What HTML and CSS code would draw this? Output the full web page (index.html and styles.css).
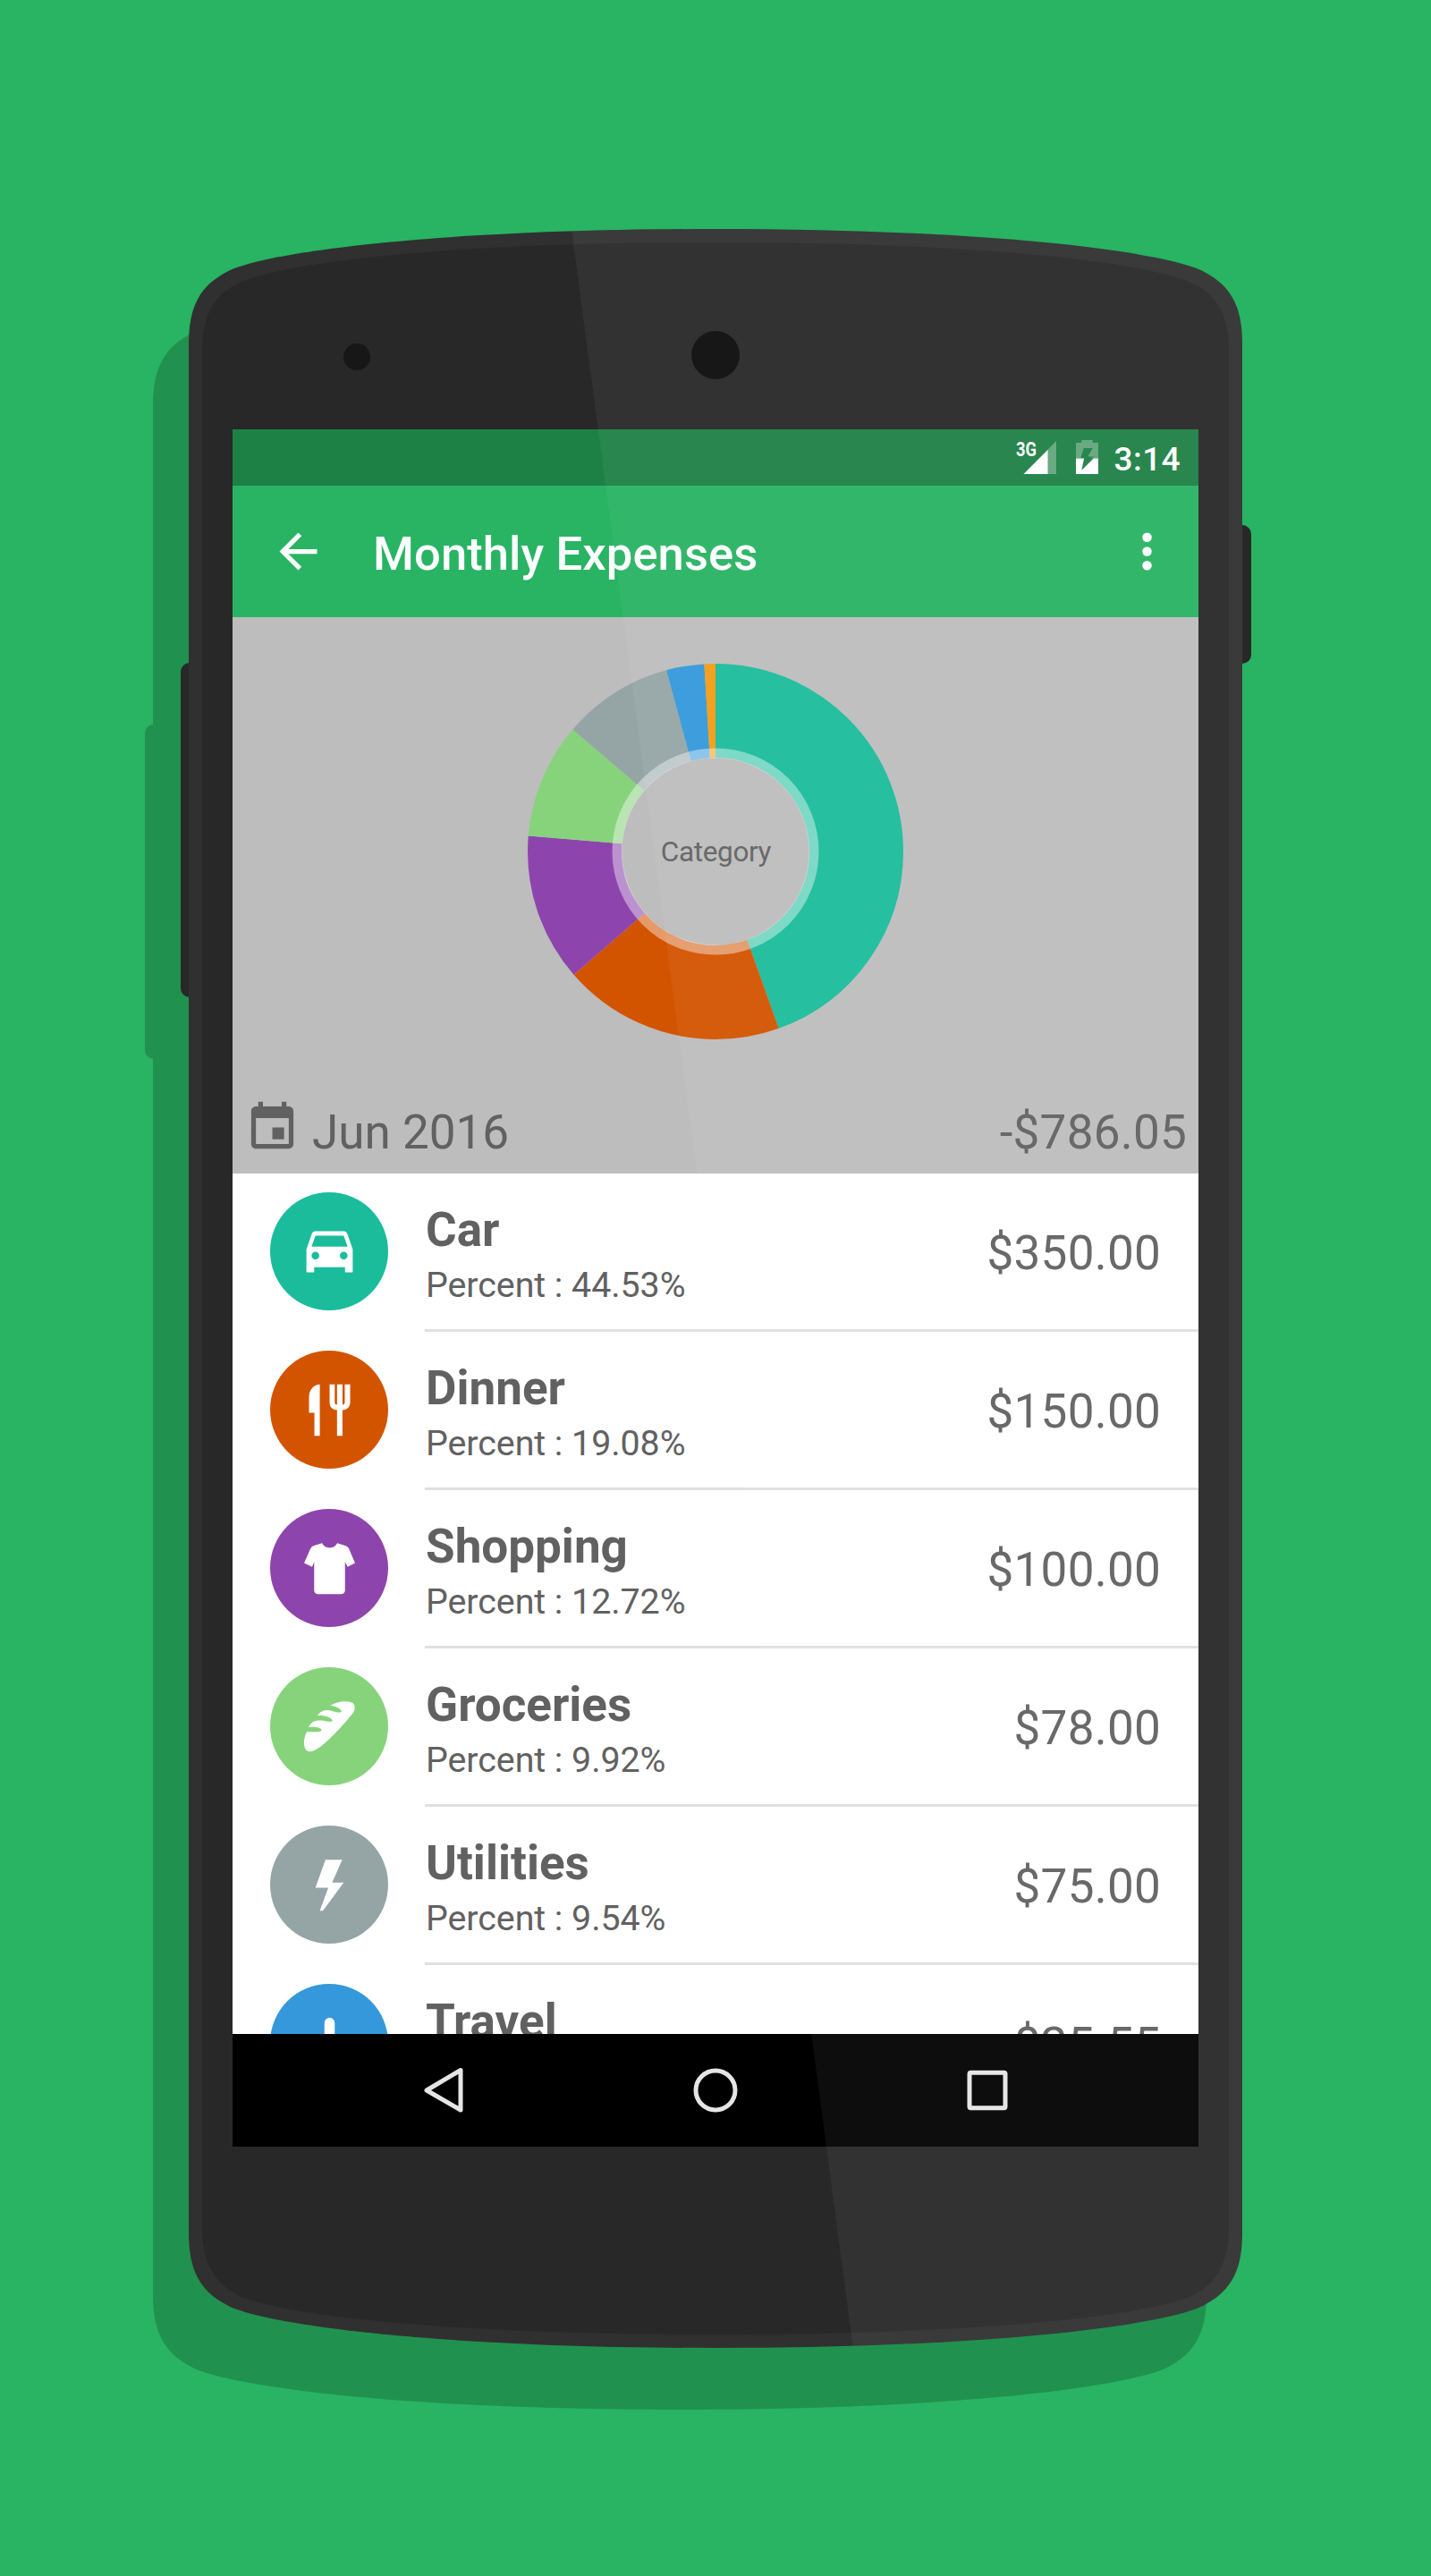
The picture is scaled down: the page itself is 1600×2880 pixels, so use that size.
FILE: index.html
```html
<!DOCTYPE html>
<html lang="en">
<head>
<meta charset="utf-8">
<title>Monthly Expenses</title>
<link rel="stylesheet" href="styles.css">
</head>
<body>
<main class="stage">
  <svg class="phone" viewBox="0 0 1600 2880" aria-hidden="true">
    <defs>
      <path id="body" d="M211 385C211 340 225 316 262 300C325 277 520 256 800 256C1080 256 1275 277 1338 300C1375 316 1389 340 1389 385V2496C1389 2541 1375 2565 1338 2581C1275 2604 1080 2625 800 2625C520 2625 325 2604 262 2581C225 2565 211 2541 211 2496Z"/>
    </defs>
    <g fill="#21914f" transform="translate(-40 69)">
      <use href="#body"/>
      <rect x="202" y="741" width="30" height="374" rx="10"/>
    </g>
    <rect x="202" y="741" width="30" height="374" rx="10" fill="#282828"/>
    <rect x="1370" y="587" width="29" height="155" rx="10" fill="#282828"/>
    <use href="#body" fill="#303030"/>
    <path fill="#282828" d="M226 390C226 355 238 330 268 316C325 291 520 271 800 271C1080 271 1275 291 1332 316C1362 330 1374 355 1374 390V2491C1374 2526 1362 2553 1332 2567C1275 2591 1080 2610 800 2610C520 2610 325 2591 268 2567C238 2553 226 2526 226 2491Z"/>
  </svg>

  <section class="screen">
    <div class="status">
      <svg class="signal" viewBox="0 0 48 40">
        <text x="0" y="18.500" class="network" textLength="23" lengthAdjust="spacingAndGlyphs">3G</text>
        <path d="M45 2V39H8.500Z" fill="#fff" fill-opacity=".3"/>
        <path d="M35.500 12V39H8.500Z" fill="#fff"/>
      </svg>
      <svg class="battery" viewBox="0 0 25 38">
        <path d="M6.300 0H18.700V3H25V20.500H16L20.700 18.600H13.300L18.700 9H8.700L5.300 20.300H9.200L9.100 20.500H0V3H6.300Z" fill="#fff" fill-opacity=".3"/>
        <path d="M0 20.500H9.100L6.300 33.700L19.700 20.500H25V38H0Z" fill="#fff"/>
      </svg>
      <span class="clock">3:14</span>
    </div>

    <header class="appbar">
      <svg class="icon" viewBox="0 0 24 24"><path d="M20 11H7.830l5.590-5.590L12 4l-8 8 8 8 1.410-1.410L7.830 13H20v-2z"/></svg>
      <h1 class="title">Monthly Expenses</h1>
      <svg class="icon" viewBox="0 0 24 24"><circle cx="12" cy="6" r="2"/><circle cx="12" cy="12" r="2"/><circle cx="12" cy="18" r="2"/></svg>
    </header>

    <section class="overview">
      <svg class="chart" viewBox="0 0 420 420">
        <g class="slices" transform="rotate(-90 210 210)">
          <circle cx="210" cy="210" r="157.500" pathLength="100" stroke="#1bbc9b" stroke-dasharray="44.530 55.470"/>
          <circle cx="210" cy="210" r="157.500" pathLength="100" stroke="#d35400" stroke-dasharray="19.080 80.920" stroke-dashoffset="-44.530"/>
          <circle cx="210" cy="210" r="157.500" pathLength="100" stroke="#8e44ad" stroke-dasharray="12.720 87.280" stroke-dashoffset="-63.610"/>
          <circle cx="210" cy="210" r="157.500" pathLength="100" stroke="#87d37c" stroke-dasharray="9.920 90.080" stroke-dashoffset="-76.330"/>
          <circle cx="210" cy="210" r="157.500" pathLength="100" stroke="#95a5a5" stroke-dasharray="9.540 90.460" stroke-dashoffset="-86.250"/>
          <circle cx="210" cy="210" r="157.500" pathLength="100" stroke="#3498db" stroke-dasharray="3.250 96.750" stroke-dashoffset="-95.790"/>
          <circle cx="210" cy="210" r="157.500" pathLength="100" stroke="#f39c12" stroke-dasharray=".960 99.040" stroke-dashoffset="-99.040"/>
        </g>
        <circle cx="210" cy="210" r="110" fill="none" stroke="#fff" stroke-opacity=".41" stroke-width="11"/>
        <text class="chart-label" x="210.500" y="220.500" text-anchor="middle">Category</text>
      </svg>
      <div class="summary">
        <svg class="calendar" viewBox="0 0 24 24"><path d="M17 12h-5v5h5v-5zM16 1v2H8V1H6v2H5c-1.110 0-1.990.900-1.990 2L3 19c0 1.100.890 2 2 2h14c1.100 0 2-.900 2-2V5c0-1.100-.900-2-2-2h-1V1h-2zm3 18H5V8h14v11z"/></svg>
        <span class="month">Jun 2016</span>
        <span class="total">-$786.05</span>
      </div>
    </section>

    <ul class="list">
      <li class="row">
        <span class="badge car"><svg viewBox="0 1 24 24"><path d="M18.920 6.010C18.720 5.420 18.160 5 17.500 5h-11c-.660 0-1.210.420-1.420 1.010L3 12v8.700c0 .2.150.3.300.3H5.700c.2 0 .3-.1.300-.3V19h12v1.700c0 .2.100.3.300.3h2.400c.2 0 .3-.1.300-.3V12l-2.080-5.990zM6.500 16a1.500 1.500 0 1 1 0-3 1.500 1.500 0 0 1 0 3zm11 0a1.500 1.500 0 1 1 0-3 1.500 1.500 0 0 1 0 3zM5 11l1.500-4.300h11L19 11H5z"/></svg></span>
        <div class="body"><div class="text"><span class="name">Car</span><span class="percent">Percent : 44.53%</span></div><span class="amount">$350.00</span></div>
      </li>
      <li class="row">
        <span class="badge dinner"><svg viewBox="0 0 24 24"><path d="M8.200 2v20H6.100v-9H4V7c0-2.800 1.800-4.900 4.200-5zM12 2h2v7c0 .5.300.8.900.9V2H17v7.900c.6-.1.900-.4.900-.9V2H20v7c0 1.700-1.200 2.900-3 3v10h-2.100V12c-1.800-.1-2.900-1.300-2.900-3z"/></svg></span>
        <div class="body"><div class="text"><span class="name">Dinner</span><span class="percent">Percent : 19.08%</span></div><span class="amount">$150.00</span></div>
      </li>
      <li class="row">
        <span class="badge shopping"><svg viewBox="0 0 24 24"><path d="M9.100 2.200C9.700 3.400 10.700 4 12 4s2.400-.6 3-1.800l3 .9c.7.2 1.200.6 1.500 1.200l2.400 5.600-2.900 1.500-1-1.900V20.500c0 .9-.6 1.500-1.500 1.500h-9c-.9 0-1.500-.6-1.500-1.500V9.500L5.200 11.400 2.100 9.900 4.600 4.300c.3-.6.7-1 1.400-1.200z"/></svg></span>
        <div class="body"><div class="text"><span class="name">Shopping</span><span class="percent">Percent : 12.72%</span></div><span class="amount">$100.00</span></div>
      </li>
      <li class="row">
        <span class="badge groceries"><svg viewBox="25.500 31.500 207 207"><path d="M53 152C41 172 40 200 50 212C58 222 72 219 85 211C125 185 165 140 205 92C218 76 216 58 202 53C180 46 150 52 132 64C150 67 166 74 169 83C166 90 155 87 140 83C122 76 100 78 88 98C105 96 135 102 139 115C136 122 120 117 105 114C80 112 64 120 59 137C75 134 98 136 102 146C100 152 90 152 75 152Z"/></svg></span>
        <div class="body"><div class="text"><span class="name">Groceries</span><span class="percent">Percent : 9.92%</span></div><span class="amount">$78.00</span></div>
      </li>
      <li class="row">
        <span class="badge utilities"><svg viewBox="0 0 24 24"><path d="M10.400 2.200h6.500L13 11h4.500L9.400 22H8.200l3.300-9h-5z"/></svg></span>
        <div class="body"><div class="text"><span class="name">Utilities</span><span class="percent">Percent : 9.54%</span></div><span class="amount">$75.00</span></div>
      </li>
      <li class="row">
        <span class="badge travel"><svg viewBox="0 0 24 24"><path d="M10 4a2 2 0 0 1 4 0v5l8 5v2l-8-2.500V19l2 1.500V22l-4-1-4 1v-1.500L10 19v-5.500L2 16v-2l8-5z"/></svg></span>
        <div class="body"><div class="text"><span class="name">Travel</span></div><span class="amount">$25.55</span></div>
      </li>
    </ul>

    <nav class="navbar">
      <svg viewBox="0 0 54 54"><path d="M46 4.500V49L8 27Z"/></svg>
      <svg viewBox="0 0 54 54"><circle cx="27" cy="27" r="22"/></svg>
      <svg viewBox="0 0 54 54"><rect x="7" y="7.200" width="40" height="39.600" rx="1.500"/></svg>
    </nav>
  </section>

  <svg class="phone" viewBox="0 0 1600 2880" aria-hidden="true">
    <defs>
      <clipPath id="edge"><use href="#body"/></clipPath>
    </defs>
    <!-- diagonal glare -->
    <g clip-path="url(#edge)" fill="#fff" fill-opacity=".05">
      <path d="M639 256H1400V2640H955.800Z"/>
    </g>
    <circle cx="399" cy="399" r="15" fill="#171717"/>
    <circle cx="800" cy="397" r="27" fill="#171717"/>
  </svg>
</main>
</body>
</html>
```
FILE: styles.css
```css
* { box-sizing: border-box; }
body { margin: 0; background: #28b463; font-family: Roboto, "Liberation Sans", sans-serif; }

.stage { position: relative; width: 1600px; height: 2880px; padding: 480px 260px; overflow: hidden; }
.phone { position: absolute; inset: 0; width: 1600px; height: 2880px; pointer-events: none; }
.screen { position: relative; width: 1080px; height: 1920px; display: flex; flex-direction: column; overflow: hidden; background: #fff; }

.status { height: 63px; flex: none; display: flex; align-items: flex-start; justify-content: flex-end; padding: 12px 20px 0 0; background: #1d8045; color: #fff; }
.signal { width: 48px; height: 40px; margin: -1px 19px 0 0; }
.network { font-size: 22px; font-weight: 700; fill: #fff; }
.battery { width: 25px; height: 38px; margin-right: 18px; }
.clock { font-size: 37px; font-weight: 500; line-height: 43px; letter-spacing: .4px; }

.appbar { height: 147px; flex: none; display: flex; align-items: center; padding: 0 26px 0 42px; background: #28b463; }
.icon { width: 63px; height: 63px; flex: none; fill: #fff; }
.title { flex: 1; margin: 0; padding: 5px 0 0 52px; font-size: 52.5px; font-weight: 500; line-height: 62px; letter-spacing: .1px; color: #fff; }

.overview { height: 622px; flex: none; display: flex; flex-direction: column; align-items: center; padding: 52px 0 15px; background: #bdbdbd; color: #616161; }
.chart { width: 420px; height: 420px; flex: none; }
.slices { fill: none; stroke-width: 105px; }
.chart-label { font-size: 31.5px; letter-spacing: -.35px; fill: #616161; }
.summary { align-self: stretch; margin-top: auto; display: flex; align-items: flex-end; padding: 0 13px; font-size: 53px; line-height: 62px; }
.calendar { width: 63px; height: 63px; margin: 0 13px 5.5px 0; fill: #616161; }
.total { margin-left: auto; letter-spacing: .25px; }

.list { flex: 1; min-height: 0; margin: 0; padding: 0; overflow: hidden; list-style: none; color: #616161; }
.row { height: 177px; display: flex; padding-left: 42px; gap: 41px; }
.badge { width: 132px; height: 132px; margin-top: 21px; flex: none; display: flex; align-items: center; justify-content: center; border-radius: 50%; }
.badge svg { width: 69px; height: 69px; fill: #fff; }
.car { background: #1bbc9b; }
.dinner { background: #d35400; }
.shopping { background: #8e44ad; }
.groceries { background: #87d37c; }
.utilities { background: #95a5a5; }
.travel { background: #3498db; }
.body { flex: 1; display: flex; justify-content: space-between; border-bottom: 3px solid #e0e0e0; padding: 32px 42px 0 1px; }
.text { display: flex; flex-direction: column; gap: 8px; }
.name { font-size: 53px; font-weight: 700; line-height: 62px; }
.percent { font-size: 39.375px; line-height: 46px; letter-spacing: -.05px; }
.amount { padding-top: 26px; font-size: 53px; line-height: 62px; letter-spacing: .25px; }

.navbar { height: 126px; flex: none; display: flex; align-items: center; justify-content: center; gap: 250px; background: #000; }
.navbar svg { width: 54px; height: 54px; fill: none; stroke: #e5e5e5; stroke-width: 5; stroke-linejoin: round; }
```
